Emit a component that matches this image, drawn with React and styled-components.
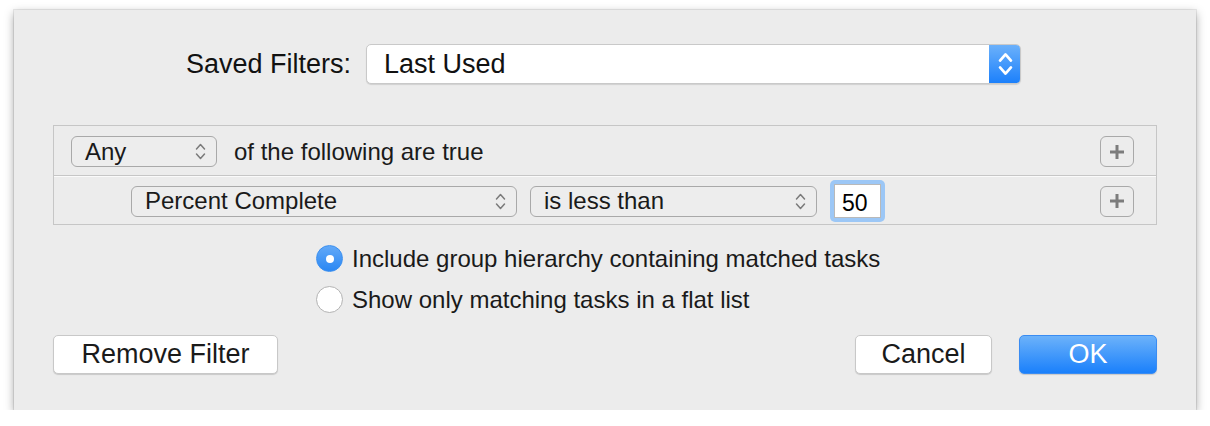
import React from "react";
import styled, { createGlobalStyle } from "styled-components";

const GlobalStyle = createGlobalStyle`
  body {
    margin: 0;
    background: #ffffff;
    font-family: "Liberation Sans", Arial, sans-serif;
    color: #1d1d1d;
  }
`;

const Chevrons = ({ color = "#7a7a7a", width = 1.5, w = 11, h = 19 }) => (
  <svg width={w} height={h} viewBox="0 0 11 19">
    <path
      d="M1.5 7 L5.5 2.5 L9.5 7 M1.5 12 L5.5 16.5 L9.5 12"
      fill="none"
      stroke={color}
      strokeWidth={width}
      strokeLinecap="round"
      strokeLinejoin="round"
    />
  </svg>
);

const Plus = () => (
  <svg width="16" height="16" viewBox="0 0 16 16">
    <path d="M8 1 V15 M1 8 H15" stroke="#7c7c7c" strokeWidth="3" />
  </svg>
);

const App = () => {
  return (
    <>
      <GlobalStyle />
      <Dialog>
        <SavedRow>
          <Label>Saved Filters:</Label>
          <SavedSelect>
            <span>Last Used</span>
            <Stepper>
              <Chevrons color="#ffffff" width={2} w={15} h={26} />
            </Stepper>
          </SavedSelect>
        </SavedRow>

        <RuleBox>
          <RuleRow>
            <Popup $width={146}>
              <span>Any</span>
              <Chevrons />
            </Popup>
            <RuleText>of the following are true</RuleText>
            <Spacer />
            <PlusButton>
              <Plus />
            </PlusButton>
          </RuleRow>
          <RuleRow $indent={77}>
            <Popup $width={386}>
              <span>Percent Complete</span>
              <Chevrons />
            </Popup>
            <Popup $width={287}>
              <span>is less than</span>
              <Chevrons />
            </Popup>
            <FocusRing>
              <ValueField>50</ValueField>
            </FocusRing>
            <Spacer />
            <PlusButton>
              <Plus />
            </PlusButton>
          </RuleRow>
        </RuleBox>

        <RadioGroup>
          <RadioRow>
            <Radio $checked />
            <span>Include group hierarchy containing matched tasks</span>
          </RadioRow>
          <RadioRow>
            <Radio />
            <span>Show only matching tasks in a flat list</span>
          </RadioRow>
        </RadioGroup>

        <ButtonBar>
          <Button $width={225}>Remove Filter</Button>
          <Spacer />
          <Button $width={137}>Cancel</Button>
          <Button $width={138} $primary>
            OK
          </Button>
        </ButtonBar>
      </Dialog>
    </>
  );
};

export default App;

const Dialog = styled.div`
  box-sizing: border-box;
  margin: 10px 0 0 14px;
  width: 1182px;
  height: 400px;
  background: #ececec;
  box-shadow: 0 0 0 1px rgba(0, 0, 0, 0.08), 0 3px 9px rgba(0, 0, 0, 0.35);
  padding: 34px 39px 0 39px;
  display: flex;
  flex-direction: column;
`;

const SavedRow = styled.div`
  display: flex;
  align-items: center;
  padding-left: 133px;
  gap: 15px;
  height: 40px;
`;

const Label = styled.div`
  font-size: 27px;
  color: #111;
`;

const SavedSelect = styled.div`
  box-sizing: border-box;
  width: 655px;
  height: 40px;
  display: flex;
  align-items: center;
  justify-content: space-between;
  background: #ffffff;
  border: 1px solid #c9c9c9;
  border-radius: 5px;
  box-shadow: 0 1px 1px rgba(0, 0, 0, 0.12);
  padding-left: 17px;
  font-size: 27px;
  color: #111;
  overflow: hidden;
`;

const Stepper = styled.div`
  width: 32px;
  height: 40px;
  margin-right: -1px;
  display: flex;
  align-items: center;
  justify-content: center;
  background: linear-gradient(#6db2fb, #1a7ffb);
  border-radius: 0 5px 5px 0;
`;

const RuleBox = styled.div`
  box-sizing: border-box;
  margin-top: 41px;
  width: 1104px;
  height: 100px;
  border: 1px solid #c6c6c6;
  display: flex;
  flex-direction: column;
`;

const RuleRow = styled.div`
  flex: 1;
  display: flex;
  align-items: center;
  padding-top: 3px;
  padding-left: ${(p) => p.$indent || 17}px;
  padding-right: 22px;
  gap: 13px;
  & + & {
    border-top: 1px solid #c6c6c6;
    box-shadow: inset 0 1px 0 #fafafa;
  }
`;

const Popup = styled.div`
  box-sizing: border-box;
  width: ${(p) => p.$width}px;
  height: 31px;
  display: flex;
  align-items: center;
  justify-content: space-between;
  padding: 0 10px 0 13px;
  border: 1px solid #a9a9a9;
  border-radius: 6px;
  background: #ededed;
  font-size: 24px;
  color: #1a1a1a;
`;

const RuleText = styled.span`
  font-size: 24px;
  margin-left: 4px;
  color: #1a1a1a;
`;

const Spacer = styled.div`
  flex: 1;
`;

const PlusButton = styled.div`
  box-sizing: border-box;
  width: 34px;
  height: 31px;
  border: 1px solid #a9a9a9;
  border-radius: 6px;
  display: flex;
  align-items: center;
  justify-content: center;
`;

const FocusRing = styled.div`
  padding: 4px;
  border-radius: 5px;
  background: #9cc7f6;
`;

const ValueField = styled.div`
  box-sizing: border-box;
  width: 47px;
  height: 34px;
  background: #ffffff;
  border: 1px solid #b9b9b9;
  padding: 5px 0 0 7px;
  font-size: 23px;
  color: #000;
`;

const RadioGroup = styled.div`
  margin-top: 20px;
  padding-left: 263px;
  display: flex;
  flex-direction: column;
  gap: 14px;
`;

const RadioRow = styled.div`
  display: flex;
  align-items: center;
  gap: 9px;
  height: 27px;
  font-size: 24px;
  color: #1a1a1a;
`;

const Radio = styled.div`
  box-sizing: border-box;
  width: 27px;
  height: 27px;
  border-radius: 50%;
  border: 1px solid ${(p) => (p.$checked ? "#3a8ff0" : "#b3b3b3")};
  background: ${(p) =>
    p.$checked ? "linear-gradient(#62a9f8, #2a87f3)" : "#ffffff"};
  display: flex;
  align-items: center;
  justify-content: center;
  &::after {
    content: "";
    display: ${(p) => (p.$checked ? "block" : "none")};
    width: 8px;
    height: 8px;
    border-radius: 50%;
    background: #ffffff;
  }
`;

const ButtonBar = styled.div`
  margin-top: 22px;
  display: flex;
  align-items: center;
  gap: 27px;
`;

const Button = styled.div`
  box-sizing: border-box;
  width: ${(p) => p.$width}px;
  height: 39px;
  display: flex;
  align-items: center;
  justify-content: center;
  border-radius: 5px;
  font-size: 27px;
  color: ${(p) => (p.$primary ? "#ffffff" : "#1a1a1a")};
  background: ${(p) =>
    p.$primary ? "linear-gradient(#6cb2fa, #1a80fb)" : "#ffffff"};
  border: 1px solid ${(p) => (p.$primary ? "#3a8cf2" : "#c8c8c8")};
  box-shadow: 0 1px 1px rgba(0, 0, 0, 0.15);
`;
